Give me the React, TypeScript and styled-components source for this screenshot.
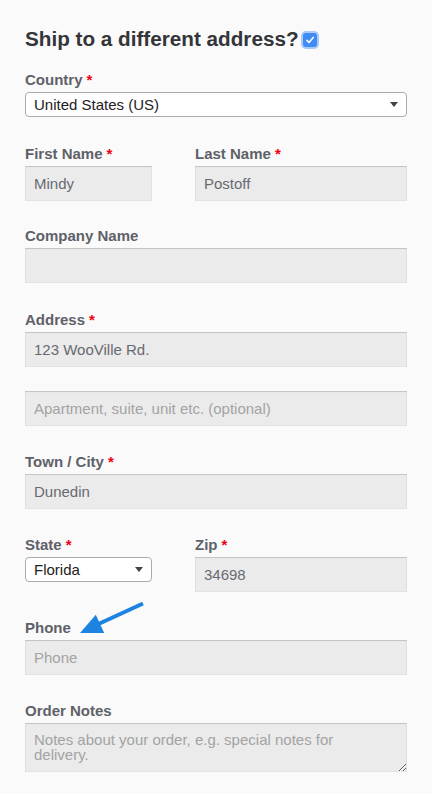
import React from 'react';
import styled, { createGlobalStyle } from 'styled-components';

const GlobalStyle = createGlobalStyle`
  html, body {
    margin: 0;
    padding: 0;
    background: #fafafa;
  }
  body {
    font-family: "Liberation Sans", Arial, Helvetica, sans-serif;
  }
`;

const Page = styled.div`
  width: 432px;
  min-height: 794px;
  box-sizing: border-box;
  padding: 27px 25px 0;
  background: #fafafa;
`;

const Heading = styled.h3`
  display: flex;
  align-items: center;
  gap: 4px;
  margin: 0 0 20px;
  font-size: 20.7px;
  line-height: 24px;
  font-weight: 700;
  color: #333538;
`;

const Check = styled.span`
  display: inline-flex;
  align-items: center;
  justify-content: center;
  width: 14px;
  height: 14px;
  margin-top: 1px;
  border-radius: 3px;
  background: #3f8cf5;
  box-shadow: 0 0 0 2px #a9c9f7;
`;

const Field = styled.div<{ $mb?: number }>`
  position: relative;
  margin-bottom: ${(p) => (p.$mb ?? 27)}px;
`;

const Row = styled.div<{ $mb?: number }>`
  display: grid;
  grid-template-columns: 170px 1fr;
  margin-bottom: ${(p) => (p.$mb ?? 27)}px;
`;

const Label = styled.label`
  display: block;
  margin-bottom: 3px;
  font-size: 15px;
  line-height: 18px;
  font-weight: 700;
  color: #5e6168;
`;

const Req = styled.abbr`
  color: #f0000f;
  text-decoration: none;
  margin-left: 4px;
`;

const Input = styled.input<{ $width?: number; $mt?: number }>`
  display: block;
  box-sizing: border-box;
  width: ${(p) => (p.$width ? `${p.$width}px` : '100%')};
  height: 35px;
  margin: ${(p) => p.$mt ?? 0}px 0 0;
  padding: 0 9px;
  border: 0;
  outline: none;
  background: #ebebeb;
  box-shadow: inset 0 1px 1px rgba(0, 0, 0, 0.14), inset 0 0 0 1px rgba(0, 0, 0, 0.03);
  font-family: inherit;
  font-size: 15px;
  color: #676a70;

  &::placeholder {
    color: #a3a3a3;
  }
`;

const TextArea = styled.textarea`
  display: block;
  box-sizing: border-box;
  width: 100%;
  height: 49px;
  margin: 0;
  padding: 9px 20px 0 9px;
  border: 0;
  outline: none;
  background: #ebebeb;
  box-shadow: inset 0 1px 1px rgba(0, 0, 0, 0.14), inset 0 0 0 1px rgba(0, 0, 0, 0.03);
  font-family: inherit;
  font-size: 15px;
  line-height: 15px;
  color: #676a70;
  resize: vertical;

  &::placeholder {
    color: #a3a3a3;
  }
`;

const SelectBox = styled.div<{ $width?: number }>`
  position: relative;
  width: ${(p) => (p.$width ? `${p.$width}px` : '100%')};
`;

const Select = styled.select`
  display: block;
  box-sizing: border-box;
  width: 100%;
  height: 25px;
  margin: 0;
  padding: 0 24px 0 8px;
  border: 1px solid #ababab;
  border-radius: 4px;
  background: #fff;
  appearance: none;
  -webkit-appearance: none;
  outline: none;
  font-family: inherit;
  font-size: 15px;
  color: #222;
`;

const Caret = styled.span`
  position: absolute;
  right: 9px;
  top: 10px;
  width: 0;
  height: 0;
  border-left: 4px solid transparent;
  border-right: 4px solid transparent;
  border-top: 5px solid #444;
  pointer-events: none;
`;

const Pointer = styled.svg`
  position: absolute;
  left: 50px;
  top: -18px;
  overflow: visible;
`;

const RequiredLabel = ({ children }: { children: React.ReactNode }) => (
  <Label>
    {children}
    <Req title="required">*</Req>
  </Label>
);

export default function App() {
  return (
    <>
      <GlobalStyle />
      <Page>
        <Heading>
          <span>Ship to a different address?</span>
          <Check>
            <svg width="10" height="10" viewBox="0 0 10 10">
              <path d="M1.8 5.3 L4 7.5 L8.3 2.4" fill="none" stroke="#fff" strokeWidth="1.5" strokeLinecap="round" strokeLinejoin="round" />
            </svg>
          </Check>
        </Heading>

        <Field $mb={28}>
          <RequiredLabel>Country</RequiredLabel>
          <SelectBox>
            <Select defaultValue="US">
              <option value="US">United States (US)</option>
            </Select>
            <Caret />
          </SelectBox>
        </Field>

        <Row $mb={26}>
          <div>
            <RequiredLabel>First Name</RequiredLabel>
            <Input $width={127} defaultValue="Mindy" />
          </div>
          <div>
            <RequiredLabel>Last Name</RequiredLabel>
            <Input defaultValue="Postoff" />
          </div>
        </Row>

        <Field $mb={28}>
          <Label>Company Name</Label>
          <Input />
        </Field>

        <Field>
          <RequiredLabel>Address</RequiredLabel>
          <Input defaultValue="123 WooVille Rd." />
          <Input $mt={24} placeholder="Apartment, suite, unit etc. (optional)" />
        </Field>

        <Field>
          <RequiredLabel>Town / City</RequiredLabel>
          <Input defaultValue="Dunedin" />
        </Field>

        <Row>
          <div>
            <RequiredLabel>State</RequiredLabel>
            <SelectBox $width={127}>
              <Select defaultValue="FL">
                <option value="FL">Florida</option>
              </Select>
              <Caret />
            </SelectBox>
          </div>
          <div>
            <RequiredLabel>Zip</RequiredLabel>
            <Input defaultValue="34698" />
          </div>
        </Row>

        <Field>
          <Label>Phone</Label>
          <Input placeholder="Phone" />
          <Pointer width="75" height="40" viewBox="0 0 75 40">
            <line x1="68" y1="2.5" x2="24" y2="22.8" stroke="#1c84e0" strokeWidth="4" />
            <polygon points="5,32 29.2,31.9 20.8,13.7" fill="#1c84e0" />
          </Pointer>
        </Field>

        <Field>
          <Label>Order Notes</Label>
          <TextArea placeholder="Notes about your order, e.g. special notes for delivery." />
        </Field>
      </Page>
    </>
  );
}
